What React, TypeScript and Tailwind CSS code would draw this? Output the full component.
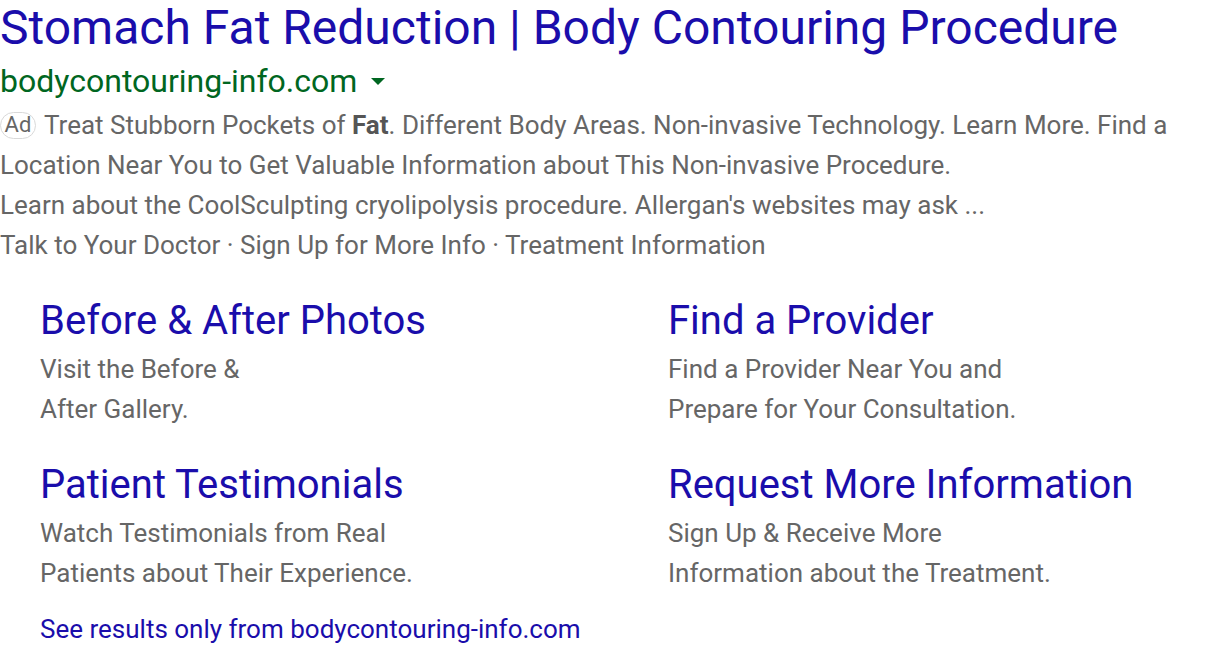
import React from "react";

const Sitelink = ({ title, l1, l2 }: { title: string; l1: string; l2: string }) => (
  <div className="flex flex-col">
    <div className="text-[40px] leading-[48px] text-[#1a0dab] whitespace-nowrap">{title}</div>
    <div className="text-[26px] leading-[40px] text-[#666666] mt-[4px] whitespace-nowrap">
      <div>{l1}</div>
      <div>{l2}</div>
    </div>
  </div>
);

export default function App() {
  return (
    <div className="w-[1216px] h-[652px] bg-white overflow-hidden" style={{ fontFamily: "Roboto, Arial, sans-serif" }}>
      <div className="text-[48px] leading-[56px] text-[#1a0dab] whitespace-nowrap">
        Stomach Fat Reduction | Body Contouring Procedure
      </div>
      <div className="flex items-center h-[49px] text-[32px] text-[#006621]">
        <span>bodycontouring-info.com</span>
        <svg width="14" height="8" viewBox="0 0 14 8" className="ml-[14px] mt-[2px]">
          <path d="M0 0 L14 0 L7 7 Z" fill="#006621" />
        </svg>
      </div>
      <div className="text-[26px] leading-[40px] text-[#666666]">
        <div className="whitespace-nowrap">
          <span className="inline-flex items-center justify-center h-[27px] w-[36px] border border-[#d9d9d9] rounded-[14px] text-[22px] leading-none mr-[8px] align-middle relative top-[-2px]">
            Ad
          </span>
          Treat Stubborn Pockets of <b className="font-bold text-[#555]">Fat</b>. Different Body Areas. Non-invasive Technology. Learn More. Find a
        </div>
        <div className="whitespace-nowrap">Location Near You to Get Valuable Information about This Non-invasive Procedure.</div>
        <div className="whitespace-nowrap">Learn about the CoolSculpting cryolipolysis procedure. Allergan's websites may ask ...</div>
        <div className="whitespace-nowrap">Talk to Your Doctor · Sign Up for More Info · Treatment Information</div>
      </div>
      <div className="grid grid-cols-[628px_1fr] pl-[40px] mt-[32px] gap-y-[32px]">
        <Sitelink title="Before & After Photos" l1="Visit the Before &" l2="After Gallery." />
        <Sitelink title="Find a Provider" l1="Find a Provider Near You and" l2="Prepare for Your Consultation." />
        <Sitelink title="Patient Testimonials" l1="Watch Testimonials from Real" l2="Patients about Their Experience." />
        <Sitelink title="Request More Information" l1="Sign Up & Receive More" l2="Information about the Treatment." />
      </div>
      <div className="pl-[40px] mt-[16px] text-[26px] leading-[40px] text-[#1a0dab] whitespace-nowrap">
        See results only from bodycontouring-info.com
      </div>
    </div>
  );
}
